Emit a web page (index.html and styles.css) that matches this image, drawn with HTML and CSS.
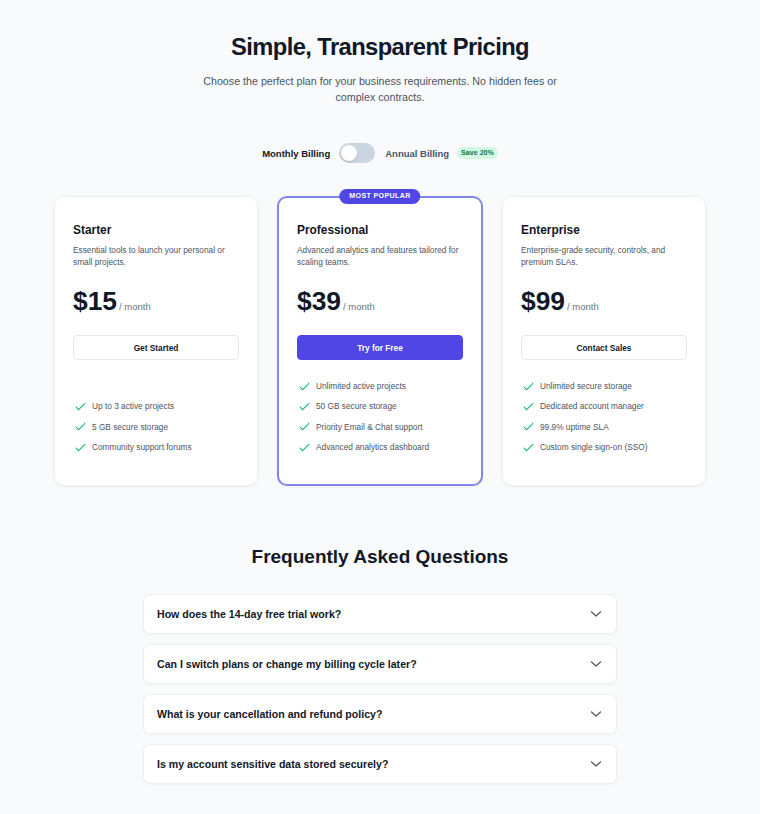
FILE: index.html
```html
<!DOCTYPE html>
<html lang="en">
<head>
<meta charset="utf-8">
<title>Pricing</title>
<link rel="stylesheet" href="styles.css">
</head>
<body>
<main class="page">
  <header class="hero">
    <h1 class="hero-title">Simple, Transparent Pricing</h1>
    <p class="hero-sub">Choose the perfect plan for your business requirements. No hidden fees or complex contracts.</p>
  </header>

  <div class="billing">
    <span class="billing-label billing-label--active">Monthly Billing</span>
    <button class="switch" type="button" aria-label="Toggle billing period"><span class="switch-knob"></span></button>
    <span class="billing-label">Annual Billing</span>
    <span class="save-pill">Save 20%</span>
  </div>

  <section class="plans">
    <article class="plan">
      <h2 class="plan-name">Starter</h2>
      <p class="plan-desc">Essential tools to launch your personal or small projects.</p>
      <div class="plan-price"><span class="amount">$15</span><span class="period">/ month</span></div>
      <button class="plan-btn" type="button">Get Started</button>
      <ul class="features">
        <li><svg class="check" viewBox="0 0 24 24"><path d="M5 13l4 4L19 7"/></svg>Up to 3 active projects</li>
        <li><svg class="check" viewBox="0 0 24 24"><path d="M5 13l4 4L19 7"/></svg>5 GB secure storage</li>
        <li><svg class="check" viewBox="0 0 24 24"><path d="M5 13l4 4L19 7"/></svg>Community support forums</li>
      </ul>
    </article>

    <article class="plan plan--featured">
      <span class="popular">MOST POPULAR</span>
      <h2 class="plan-name">Professional</h2>
      <p class="plan-desc">Advanced analytics and features tailored for scaling teams.</p>
      <div class="plan-price"><span class="amount">$39</span><span class="period">/ month</span></div>
      <button class="plan-btn plan-btn--primary" type="button">Try for Free</button>
      <ul class="features">
        <li><svg class="check" viewBox="0 0 24 24"><path d="M5 13l4 4L19 7"/></svg>Unlimited active projects</li>
        <li><svg class="check" viewBox="0 0 24 24"><path d="M5 13l4 4L19 7"/></svg>50 GB secure storage</li>
        <li><svg class="check" viewBox="0 0 24 24"><path d="M5 13l4 4L19 7"/></svg>Priority Email &amp; Chat support</li>
        <li><svg class="check" viewBox="0 0 24 24"><path d="M5 13l4 4L19 7"/></svg>Advanced analytics dashboard</li>
      </ul>
    </article>

    <article class="plan">
      <h2 class="plan-name">Enterprise</h2>
      <p class="plan-desc">Enterprise-grade security, controls, and premium SLAs.</p>
      <div class="plan-price"><span class="amount">$99</span><span class="period">/ month</span></div>
      <button class="plan-btn" type="button">Contact Sales</button>
      <ul class="features">
        <li><svg class="check" viewBox="0 0 24 24"><path d="M5 13l4 4L19 7"/></svg>Unlimited secure storage</li>
        <li><svg class="check" viewBox="0 0 24 24"><path d="M5 13l4 4L19 7"/></svg>Dedicated account manager</li>
        <li><svg class="check" viewBox="0 0 24 24"><path d="M5 13l4 4L19 7"/></svg>99.9% uptime SLA</li>
        <li><svg class="check" viewBox="0 0 24 24"><path d="M5 13l4 4L19 7"/></svg>Custom single sign-on (SSO)</li>
      </ul>
    </article>
  </section>

  <section class="faq">
    <h2 class="faq-title">Frequently Asked Questions</h2>
    <div class="faq-list">
      <div class="faq-item"><span>How does the 14-day free trial work?</span><svg class="chevron" viewBox="0 0 12 12"><path d="M1.5 4l4.5 4 4.5-4"/></svg></div>
      <div class="faq-item"><span>Can I switch plans or change my billing cycle later?</span><svg class="chevron" viewBox="0 0 12 12"><path d="M1.5 4l4.5 4 4.5-4"/></svg></div>
      <div class="faq-item"><span>What is your cancellation and refund policy?</span><svg class="chevron" viewBox="0 0 12 12"><path d="M1.5 4l4.5 4 4.5-4"/></svg></div>
      <div class="faq-item"><span>Is my account sensitive data stored securely?</span><svg class="chevron" viewBox="0 0 12 12"><path d="M1.5 4l4.5 4 4.5-4"/></svg></div>
    </div>
  </section>
</main>
</body>
</html>
```
FILE: styles.css
```css
* { box-sizing: border-box; }

html, body {
  margin: 0;
  background: #f9fafb;
  font-family: "Liberation Sans", Arial, sans-serif;
  color: #111827;
}

.page {
  padding: 33px 0 29px;
  display: flex;
  flex-direction: column;
  align-items: center;
}

/* Heading block */
.hero { text-align: center; }

.hero-title {
  margin: 0;
  font-size: 23.75px;
  line-height: 28px;
  letter-spacing: -0.6px;
  font-weight: 700;
  color: #111827;
}

.hero-sub {
  margin: 12px auto 0;
  max-width: 370px;
  font-size: 10.7px;
  line-height: 16px;
  color: #4b5563;
}

/* Monthly / annual switch */
.billing {
  margin-top: 38px;
  display: flex;
  align-items: center;
  height: 20px;
}

.billing-label {
  font-size: 9.5px;
  font-weight: 700;
  color: #4b5563;
}

.billing-label--active { color: #111827; }

.switch {
  margin: 0 10px 0 9px;
  width: 36px;
  height: 20px;
  padding: 2px;
  border: 0;
  border-radius: 10px;
  background: #cbd5e1;
  display: flex;
  align-items: center;
}

.switch-knob {
  width: 16px;
  height: 16px;
  border-radius: 50%;
  background: #fff;
  box-shadow: 0 1px 2px rgba(0, 0, 0, 0.15);
}

.save-pill {
  margin-left: 8px;
  padding: 0 4px;
  height: 12px;
  line-height: 12px;
  border-radius: 6px;
  background: #d1fae5;
  color: #047857;
  font-size: 7.1px;
  font-weight: 700;
}

/* Plan cards */
.plans {
  margin-top: 33px;
  width: 652px;
  display: grid;
  grid-template-columns: repeat(3, 1fr);
  gap: 20px;
}

.plan {
  position: relative;
  display: flex;
  flex-direction: column;
  background: #fff;
  border: 1px solid #eef0f3;
  border-radius: 10px;
  box-shadow: 0 1px 3px rgba(15, 23, 42, 0.06);
  padding: 24px 18px 28px;
}

.plan--featured {
  border: 2px solid #8087e6;
  padding: 23px 18px 27px;
  margin: 0 -1px;
}

.popular {
  position: absolute;
  top: -9px;
  left: 50%;
  transform: translateX(-50%);
  height: 15px;
  line-height: 15px;
  padding: 0 10px;
  border-radius: 8px;
  background: #4f46e5;
  color: #fff;
  font-size: 7.1px;
  font-weight: 700;
  letter-spacing: 0.36px;
  white-space: nowrap;
}

.plan-name {
  margin: 0;
  font-size: 11.9px;
  line-height: 18px;
  font-weight: 700;
  color: #111827;
}

.plan-desc {
  margin: 5px 0 0;
  font-size: 8.3px;
  line-height: 12px;
  color: #4b5563;
}

.plan-price {
  margin-top: 17px;
  height: 32px;
  display: flex;
  align-items: baseline;
  gap: 2px;
}

.amount {
  font-size: 26.4px;
  line-height: 32px;
  font-weight: 700;
  color: #111827;
}

.period {
  font-size: 9.5px;
  color: #6b7280;
}

.plan-btn {
  margin-top: 18px;
  height: 25px;
  width: 100%;
  border: 1px solid #e5e7eb;
  border-radius: 4px;
  background: #fff;
  font-family: inherit;
  font-size: 8.3px;
  font-weight: 700;
  color: #111827;
}

.plan-btn--primary {
  background: #4f46e5;
  border-color: #4f46e5;
  color: #fff;
}

.features {
  list-style: none;
  margin: auto 0 0;
  padding: 16px 0 0;
}

.features li {
  display: flex;
  align-items: center;
  gap: 4px;
  height: 20.3px;
  font-size: 8.3px;
  color: #4b5563;
}

.check {
  flex: none;
  width: 15px;
  height: 15px;
  fill: none;
  stroke: #10b981;
  stroke-width: 1.8;
  stroke-linecap: round;
  stroke-linejoin: round;
}

/* FAQ */
.faq {
  margin-top: 59px;
  width: 474px;
}

.faq-title {
  margin: 0;
  text-align: center;
  font-size: 19px;
  line-height: 24px;
  font-weight: 700;
  color: #111827;
}

.faq-list {
  margin-top: 25px;
  display: flex;
  flex-direction: column;
  gap: 10px;
}

.faq-item {
  height: 40px;
  padding: 0 14px 0 13px;
  display: flex;
  align-items: center;
  justify-content: space-between;
  background: #fff;
  border: 1px solid #eceef1;
  border-radius: 7px;
  box-shadow: 0 1px 2px rgba(15, 23, 42, 0.04);
  font-size: 10.6px;
  font-weight: 700;
  color: #111827;
}

.chevron {
  width: 12px;
  height: 12px;
  fill: none;
  stroke: #4b5563;
  stroke-width: 1.2;
  stroke-linecap: round;
  stroke-linejoin: round;
}
```
